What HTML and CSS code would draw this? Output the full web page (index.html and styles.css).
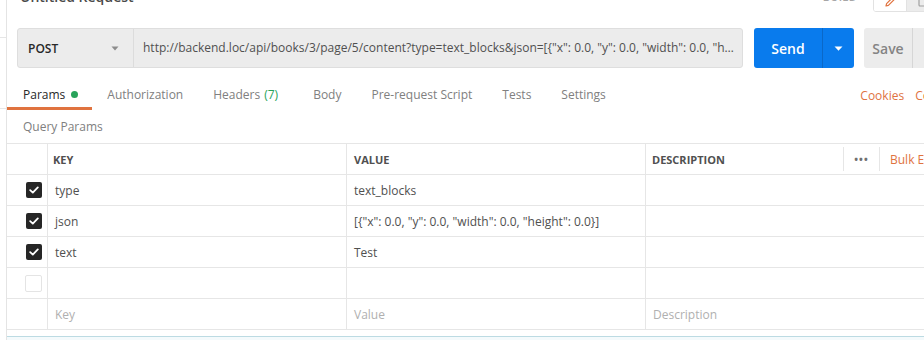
FILE: index.html
```html
<!DOCTYPE html>
<html lang="en">
<head>
<meta charset="utf-8">
<title>Untitled Request</title>
<link rel="stylesheet" href="styles.css">
</head>
<body>
<div class="app">
  <div class="sidebar-edge">
    <span class="tick tick-a"></span>
    <span class="tick tick-b"></span>
  </div>
  <div class="main">
    <div class="titlebar">
      <div class="title">Untitled Request</div>
      <div class="title-right">
        <span class="build">BUILD</span>
        <div class="mode-toggle">
          <span class="mode mode-on">
            <svg width="12" height="12" viewBox="0 0 12 12"><path d="M2 10 L2.6 7.6 L8.4 1.8 L10.2 3.6 L4.4 9.4 Z" fill="none" stroke="#e0733f" stroke-width="1.2" stroke-linejoin="round"/></svg>
          </span>
          <span class="mode mode-off">
            <svg width="12" height="12" viewBox="0 0 12 12"><rect x="2" y="2" width="8" height="8" rx="1" fill="none" stroke="#a0a0a0" stroke-width="1.2"/></svg>
          </span>
        </div>
      </div>
    </div>

    <div class="request-bar">
      <div class="url-group">
        <div class="method">
          <span class="method-name">POST</span>
          <svg class="caret" width="8" height="5" viewBox="0 0 8 5"><path d="M0.5 0.5 L7.5 0.5 L4 4.5 Z" fill="#8c8c8c"/></svg>
        </div>
        <div class="url">http://backend.loc/api/books/3/page/5/content?type=text_blocks&amp;json=[{"x": 0.0, "y": 0.0, "width": 0.0, "height": 0.0}]&amp;text=Test</div>
      </div>
      <div class="send">
        <span class="send-label">Send</span>
        <span class="send-caret">
          <svg width="9" height="5" viewBox="0 0 9 5"><path d="M0.5 0.5 L8.5 0.5 L4.5 4.8 Z" fill="#ffffff"/></svg>
        </span>
      </div>
      <div class="save">
        <span class="save-label">Save</span>
        <span class="save-caret"></span>
      </div>
    </div>

    <div class="tabs">
      <div class="tab-list">
        <span class="tab active">Params <span class="dot"></span></span>
        <span class="tab">Authorization</span>
        <span class="tab tab-headers">Headers <span class="count">(7)</span></span>
        <span class="tab">Body</span>
        <span class="tab">Pre-request Script</span>
        <span class="tab">Tests</span>
        <span class="tab">Settings</span>
      </div>
      <div class="tab-links">
        <span class="link">Cookies</span>
        <span class="link">Code</span>
      </div>
    </div>

    <div class="section-label">Query Params</div>

    <div class="params-table">
      <div class="row head">
        <div class="cell check"></div>
        <div class="cell key">KEY</div>
        <div class="cell value">VALUE</div>
        <div class="cell desc">
          <span class="desc-label">DESCRIPTION</span>
          <span class="more">&#8226;&#8226;&#8226;</span>
          <span class="bulk">Bulk Edit</span>
        </div>
      </div>
      <div class="row">
        <div class="cell check"><span class="box on"><svg width="10" height="8" viewBox="0 0 10 8"><path d="M1.2 4.2 L3.8 6.6 L8.8 1.4" fill="none" stroke="#fff" stroke-width="1.8" stroke-linecap="round" stroke-linejoin="round"/></svg></span></div>
        <div class="cell key">type</div>
        <div class="cell value">text_blocks</div>
        <div class="cell desc"></div>
      </div>
      <div class="row">
        <div class="cell check"><span class="box on"><svg width="10" height="8" viewBox="0 0 10 8"><path d="M1.2 4.2 L3.8 6.6 L8.8 1.4" fill="none" stroke="#fff" stroke-width="1.8" stroke-linecap="round" stroke-linejoin="round"/></svg></span></div>
        <div class="cell key">json</div>
        <div class="cell value">[{"x": 0.0, "y": 0.0, "width": 0.0, "height": 0.0}]</div>
        <div class="cell desc"></div>
      </div>
      <div class="row">
        <div class="cell check"><span class="box on"><svg width="10" height="8" viewBox="0 0 10 8"><path d="M1.2 4.2 L3.8 6.6 L8.8 1.4" fill="none" stroke="#fff" stroke-width="1.8" stroke-linecap="round" stroke-linejoin="round"/></svg></span></div>
        <div class="cell key">text</div>
        <div class="cell value">Test</div>
        <div class="cell desc"></div>
      </div>
      <div class="row">
        <div class="cell check"><span class="box off"></span></div>
        <div class="cell key"></div>
        <div class="cell value"></div>
        <div class="cell desc"></div>
      </div>
      <div class="row last">
        <div class="cell check"></div>
        <div class="cell key placeholder">Key</div>
        <div class="cell value placeholder">Value</div>
        <div class="cell desc placeholder">Description</div>
      </div>
    </div>

    <div class="response-edge"></div>
  </div>
</div>
</body>
</html>
```

FILE: styles.css
```css
* { box-sizing: border-box; }

html, body {
  margin: 0;
  padding: 0;
  background: #ffffff;
  overflow: hidden;
}

body {
  font-family: "Open Sans", "Noto Sans", sans-serif;
  font-size: 12px;
  color: #505050;
  width: 924px;
  height: 340px;
}

.app {
  display: flex;
  width: 1040px;
  height: 340px;
}

.sidebar-edge {
  width: 6px;
  flex: none;
  display: flex;
  flex-direction: column;
}

.tick {
  display: block;
  flex: none;
  height: 1px;
  background: #e6e6e6;
}

.tick-a { margin-top: 37px; }
.tick-b { margin-top: 70px; }

.main {
  flex: 1;
  border-left: 1px solid #e4e4e4;
  display: flex;
  flex-direction: column;
}

.main > * { flex: none; }

/* title bar */
.titlebar {
  height: 28px;
  display: flex;
  align-items: flex-start;
  justify-content: space-between;
}

.title {
  margin-top: -13px;
  margin-left: 13px;
  font-size: 14px;
  line-height: 20px;
  font-weight: 600;
  color: #4a4a4a;
}

.title-right {
  display: flex;
  align-items: flex-start;
  margin-right: 101px;
}

.build {
  margin-top: -11px;
  font-size: 11px;
  line-height: 16px;
  font-weight: 600;
  color: #a6a6a6;
  letter-spacing: 0.3px;
  margin-right: 16px;
}

.mode-toggle {
  margin-top: -14px;
  height: 26px;
  display: flex;
  border: 1px solid #e2e2e2;
  border-radius: 3px;
  overflow: hidden;
}

.mode {
  width: 32px;
  display: flex;
  align-items: center;
  justify-content: center;
  padding-top: 6px;
}

.mode-on { background: #ffffff; }
.mode-off { background: #ececec; border-left: 1px solid #e2e2e2; }

/* request bar */
.request-bar {
  display: flex;
  height: 40px;
  padding-left: 10px;
}

.url-group {
  width: 726px;
  display: flex;
  background: #ececec;
  border: 1px solid #dedede;
  border-radius: 3px;
}

.method {
  width: 116px;
  flex: none;
  display: flex;
  align-items: center;
  justify-content: space-between;
  padding: 0 14px 0 10px;
  border-right: 1px solid #dcdcdc;
}

.method-name {
  font-weight: 600;
  color: #282828;
  font-size: 12px;
}

.url {
  flex: 1;
  min-width: 0;
  padding: 0 7px 0 9px;
  white-space: nowrap;
  overflow: hidden;
  text-overflow: ellipsis;
  line-height: 38px;
  color: #505050;
}

.send {
  margin-left: 11px;
  width: 100px;
  display: flex;
  background: #097bed;
  border-radius: 3px;
  color: #ffffff;
}

.send-label {
  width: 69px;
  display: flex;
  align-items: center;
  justify-content: center;
  font-size: 14px;
  font-weight: 600;
  border-right: 1px solid #0a68c8;
}

.send-caret {
  flex: 1;
  display: flex;
  align-items: center;
  justify-content: center;
}

.save {
  margin-left: 10px;
  width: 86px;
  display: flex;
  background: #ececec;
  border-radius: 3px;
}

.save-label {
  width: 49px;
  display: flex;
  align-items: center;
  justify-content: center;
  font-size: 14px;
  font-weight: 600;
  color: #848484;
  border-right: 1px solid #d6d6d6;
}

.save-caret { flex: 1; }

/* tabs */
.tabs {
  margin-top: 10px;
  height: 32px;
  display: flex;
  justify-content: space-between;
}

.tab-list {
  display: flex;
}

.tab {
  padding: 0 15px;
  display: flex;
  align-items: center;
  color: #808080;
  border-bottom: 3px solid transparent;
  padding-top: 3px;
}

.tab.active {
  padding-left: 16px;
  padding-right: 14px;
  color: #282828;
  border-bottom-color: #e0733f;
}

.tab-headers { padding-right: 20px; }

.dot {
  display: inline-block;
  width: 7px;
  height: 7px;
  border-radius: 50%;
  background: #28a35a;
  margin-left: 6px;
}

.count {
  color: #28a35a;
  margin-left: 4px;
}

.tab-links {
  display: flex;
  align-items: center;
  gap: 11px;
  padding-top: 3px;
  padding-right: 96px;
}

.link { color: #e0733f; }

/* query params */
.section-label {
  height: 33px;
  display: flex;
  align-items: center;
  padding-left: 16px;
  color: #808080;
}

.params-table {
  display: flex;
  flex-direction: column;
}

.row {
  display: flex;
  flex: none;
  height: 31px;
  border-top: 1px solid #e6e6e6;
}

.row.last {
  border-bottom: 1px solid #e6e6e6;
  height: 32px;
}

.cell {
  display: flex;
  align-items: center;
  border-right: 1px solid #e6e6e6;
  padding-left: 7px;
  white-space: nowrap;
  color: #505050;
}

.cell.check {
  width: 41px;
  padding-left: 19px;
}

.cell.key { width: 299px; }
.cell.value { width: 299px; }

.cell.desc {
  flex: 1;
  border-right: none;
  padding-left: 7px;
}

.head .cell {
  font-size: 11px;
  font-weight: 700;
  color: #505050;
  padding-left: 5px;
}

.head .cell.check { padding-left: 19px; }
.head .cell.value { padding-left: 7px; }

.head .cell.desc {
  padding-left: 0;
  align-items: stretch;
}

.desc-label {
  width: 197px;
  padding-left: 6px;
  display: flex;
  align-items: center;
}

.more {
  width: 37px;
  display: flex;
  align-items: center;
  justify-content: center;
  border-left: 1px solid #e6e6e6;
  border-right: 1px solid #e6e6e6;
  margin: 3px 0;
  color: #707070;
  font-size: 10px;
  letter-spacing: 1px;
}

.bulk {
  display: flex;
  align-items: center;
  padding-left: 10px;
  font-size: 12px;
  font-weight: 400;
  color: #e0733f;
}

.box {
  width: 16px;
  height: 16px;
  border-radius: 2px;
  display: flex;
  align-items: center;
  justify-content: center;
}

.box.on { background: #262626; }

.box.off {
  border: 1px solid #e4e4e4;
  margin-left: -1px;
  width: 17px;
  height: 17px;
  margin-top: 1px;
}

.placeholder { color: #b0b0b0; }

.response-edge {
  margin-top: 6px;
  height: 20px;
  border-top: 1px solid #bcdbe3;
  background: #f4fafc;
}
```
